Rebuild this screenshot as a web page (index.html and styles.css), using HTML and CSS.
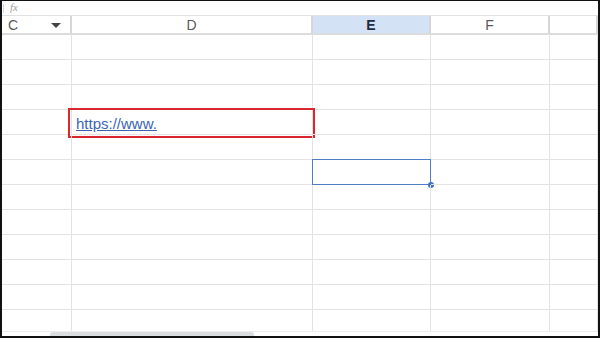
FILE: index.html
```html
<!DOCTYPE html>
<html lang="en">
<head>
  <meta charset="UTF-8">
  <meta name="viewport" content="width=device-width, initial-scale=1.0">
  <title>Sheet</title>
  <link rel="stylesheet" href="styles.css">
</head>
<body>
  <div class="sheet">
    <div class="formula-bar">
      <span class="formula-tick"></span>
      <span class="fx">fx</span>
    </div>

    <div class="col-headers">
      <div class="col-head col-c">C <span class="col-arrow"></span></div>
      <div class="col-head">D</div>
      <div class="col-head col-active">E</div>
      <div class="col-head">F</div>
      <div class="col-head"></div>
    </div>

    <div class="grid">
      <div class="row"><div class="cell"></div><div class="cell"></div><div class="cell"></div><div class="cell"></div><div class="cell"></div></div>
      <div class="row"><div class="cell"></div><div class="cell"></div><div class="cell"></div><div class="cell"></div><div class="cell"></div></div>
      <div class="row"><div class="cell"></div><div class="cell"></div><div class="cell"></div><div class="cell"></div><div class="cell"></div></div>
      <div class="row">
        <div class="cell"></div>
        <div class="cell link-cell">
          <a href="#" class="cell-link">https://www.</a>
          <span class="highlight-box"></span>
        </div>
        <div class="cell"></div><div class="cell"></div><div class="cell"></div>
      </div>
      <div class="row"><div class="cell"></div><div class="cell"></div><div class="cell"></div><div class="cell"></div><div class="cell"></div></div>
      <div class="row">
        <div class="cell"></div><div class="cell"></div>
        <div class="cell selected-cell">
          <span class="selection"><span class="fill-handle"></span></span>
        </div>
        <div class="cell"></div><div class="cell"></div>
      </div>
      <div class="row"><div class="cell"></div><div class="cell"></div><div class="cell"></div><div class="cell"></div><div class="cell"></div></div>
      <div class="row"><div class="cell"></div><div class="cell"></div><div class="cell"></div><div class="cell"></div><div class="cell"></div></div>
      <div class="row"><div class="cell"></div><div class="cell"></div><div class="cell"></div><div class="cell"></div><div class="cell"></div></div>
      <div class="row"><div class="cell"></div><div class="cell"></div><div class="cell"></div><div class="cell"></div><div class="cell"></div></div>
      <div class="row"><div class="cell"></div><div class="cell"></div><div class="cell"></div><div class="cell"></div><div class="cell"></div></div>
      <div class="row"><div class="cell"></div><div class="cell"></div><div class="cell"></div><div class="cell"></div><div class="cell"></div></div>
    </div>

    <div class="scroll-track">
      <div class="scroll-thumb"></div>
    </div>
  </div>
</body>
</html>
```

FILE: styles.css
```css
body {
  margin: 0;
  background: #fff;
  font-family: 'Liberation Sans', Arial, sans-serif;
}

.sheet {
  width: 600px;
  height: 338px;
  box-sizing: border-box;
  border-style: solid;
  border-color: #111;
  border-width: 1px 2px 2px 2px;
  display: flex;
  flex-direction: column;
  overflow: hidden;
  background: #fff;
}

.formula-bar {
  height: 15px;
  box-sizing: border-box;
  border-bottom: 1px solid #e1e1e1;
  display: flex;
  align-items: center;
  gap: 6px;
  padding-left: 1px;
}

.formula-tick {
  width: 1px;
  height: 9px;
  background: #dadada;
}

.fx {
  font-family: 'Liberation Serif', serif;
  font-style: italic;
  font-size: 11px;
  color: #a0a0a0;
  margin-top: -3px;
}

.col-headers,
.row {
  display: grid;
  grid-template-columns: 70px 241px 118px 119px 1fr;
}

.col-headers {
  height: 19px;
  box-sizing: border-box;
  border-bottom: 2px solid #dcdcdc;
}

.col-head {
  box-sizing: border-box;
  border-right: 2px solid #d6d6d6;
  display: flex;
  align-items: center;
  justify-content: center;
  font-size: 14px;
  color: #5a5a5a;
}

.col-c {
  justify-content: space-between;
  padding: 0 9px 0 6px;
}

.col-arrow {
  width: 0;
  height: 0;
  border-left: 5px solid transparent;
  border-right: 5px solid transparent;
  border-top: 5px solid #444;
  margin-top: 1px;
}

.col-active {
  background: #d3e3f5;
  color: #1f2c44;
  font-weight: bold;
}

.grid {
  flex: 1;
  overflow: hidden;
}

.row {
  height: 25px;
}

.cell {
  position: relative;
  box-sizing: border-box;
  border-right: 1px solid #e3e3e3;
  border-bottom: 1px solid #e3e3e3;
}

.link-cell {
  display: flex;
  align-items: center;
  padding-left: 4px;
}

.cell-link {
  font-size: 15px;
  color: #3a65b5;
  text-decoration: underline;
  margin-top: 2px;
}

.highlight-box {
  position: absolute;
  left: -4px;
  top: -2px;
  width: 247px;
  height: 30px;
  box-sizing: border-box;
  border: 2px solid #d9262f;
}

.selection {
  position: absolute;
  left: -1px;
  top: -1px;
  width: 119px;
  height: 26px;
  box-sizing: border-box;
  border: 1px solid #4f7cc4;
}

.fill-handle {
  position: absolute;
  right: -4px;
  bottom: -4px;
  width: 6px;
  height: 6px;
  border-radius: 50%;
  background: #3f6fbf;
}

.scroll-track {
  height: 5px;
  box-sizing: border-box;
  border-top: 1px solid #ececec;
  padding-left: 48px;
}

.scroll-thumb {
  width: 204px;
  height: 4px;
  border-radius: 3px 3px 0 0;
  background: #dadcdf;
}
```
